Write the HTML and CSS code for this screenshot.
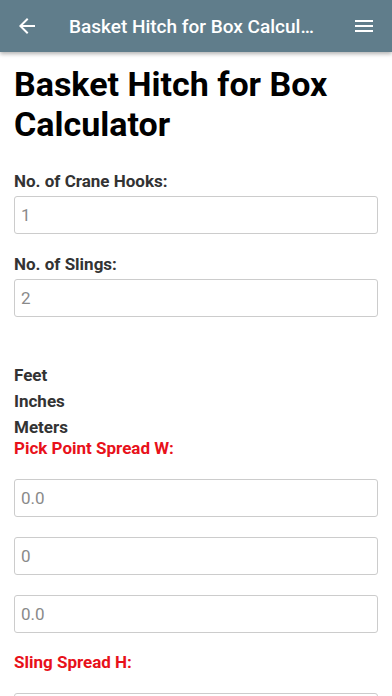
FILE: index.html
```html
<!DOCTYPE html>
<html>
<head>
<meta charset="utf-8">
<link rel="stylesheet" href="styles.css">
</head>
<body>
<header class="appbar">
  <svg class="icon back" viewBox="0 0 24 24" width="24" height="24"><path d="M20 11H7.83l5.59-5.59L12 4l-8 8 8 8 1.41-1.41L7.83 13H20v-2z" fill="#fff"/></svg>
  <div class="title">Basket Hitch for Box Calculator</div>
  <svg class="icon menu" viewBox="0 0 24 24" width="24" height="24"><path d="M3 18h18v-2H3v2zm0-5h18v-2H3v2zm0-7v2h18V6H3z" fill="#fff"/></svg>
</header>
<main class="content">
  <h1 class="heading">Basket Hitch for Box Calculator</h1>
  <div class="field">
    <label class="label">No. of Crane Hooks:</label>
    <input class="input" type="text" placeholder="1">
  </div>
  <div class="field">
    <label class="label">No. of Slings:</label>
    <input class="input" type="text" placeholder="2">
  </div>
  <div class="units">
    <div class="unit">Feet</div>
    <div class="unit">Inches</div>
    <div class="unit">Meters</div>
  </div>
  <div class="label red">Pick Point Spread W:</div>
  <div class="stack">
    <input class="input" type="text" placeholder="0.0">
    <input class="input" type="text" placeholder="0">
    <input class="input" type="text" placeholder="0.0">
  </div>
  <div class="label red red2">Sling Spread H:</div>
  <div class="stack">
    <input class="input" type="text" placeholder="0.0">
  </div>
</main>
</body>
</html>
```
FILE: styles.css
```css
html, body {
  margin: 0;
  padding: 0;
  background: #fff;
  font-family: Roboto, "Liberation Sans", sans-serif;
}
.appbar {
  height: 52px;
  background: #607d8b;
  display: flex;
  align-items: center;
  color: #fff;
  box-shadow: 0 2px 4px rgba(0,0,0,0.3);
  position: relative;
}
.icon { flex: none; }
.back { margin-left: 15px; }
.title {
  flex: 1;
  min-width: 0;
  margin-left: 30px;
  margin-right: 28px;
  font-size: 19px;
  font-weight: 500;
  white-space: nowrap;
  overflow: hidden;
  text-overflow: ellipsis;
}
.menu { margin-right: 16px; }
.content {
  padding: 0 14px;
}
.heading {
  margin: 12px 0 27px;
  font-size: 34px;
  line-height: 40px;
  font-weight: 700;
  color: #000;
}
.field {
  display: flex;
  flex-direction: column;
  margin-bottom: 20px;
}
.label {
  display: block;
  font-size: 17px;
  line-height: 21px;
  font-weight: 700;
  color: #333;
  margin-bottom: 4px;
}
.input {
  box-sizing: border-box;
  width: 100%;
  height: 38px;
  border: 1px solid #ccc;
  border-radius: 3px;
  padding: 0 6px;
  font-family: Roboto, "Liberation Sans", sans-serif;
  font-size: 17px;
  color: #555;
  background: #fff;
  outline: none;
  margin: 0;
}
.input::placeholder { color: #8a8a8a; }
.units {
  margin-top: 45px;
}
.unit {
  font-size: 17px;
  line-height: 26px;
  font-weight: 700;
  color: #333;
}
.red {
  color: #e8111a;
  margin-top: -2px;
  margin-bottom: 20px;
}
.red2 { margin-top: 19px; }
.stack {
  display: flex;
  flex-direction: column;
  gap: 20px;
}
```
